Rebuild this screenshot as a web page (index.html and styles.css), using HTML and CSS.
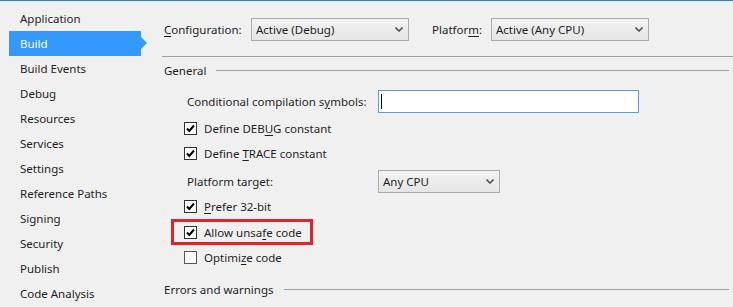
FILE: index.html
```html
<!DOCTYPE html>
<html>
<head>
<meta charset="utf-8">
<link rel="stylesheet" href="styles.css">
</head>
<body>
<div class="topline"></div>
<div class="page">
  <nav class="sidebar">
    <div class="nav-item">Application</div>
    <div class="nav-item active">Build</div>
    <div class="nav-item">Build Events</div>
    <div class="nav-item">Debug</div>
    <div class="nav-item">Resources</div>
    <div class="nav-item">Services</div>
    <div class="nav-item">Settings</div>
    <div class="nav-item">Reference Paths</div>
    <div class="nav-item">Signing</div>
    <div class="nav-item">Security</div>
    <div class="nav-item">Publish</div>
    <div class="nav-item">Code Analysis</div>
  </nav>
  <main class="main">
    <div class="config-row">
      <span class="config-label"><u>C</u>onfiguration:</span>
      <div class="combo combo-config">
        <span>Active (Debug)</span>
        <svg class="chev" width="8" height="5" viewBox="0 0 8 5"><path d="M0.5 0.5 L4 4 L7.5 0.5" fill="none" stroke="#555" stroke-width="1.6"/></svg>
      </div>
      <span class="platform-label">Platfor<u>m</u>:</span>
      <div class="combo combo-config">
        <span>Active (Any CPU)</span>
        <svg class="chev" width="8" height="5" viewBox="0 0 8 5"><path d="M0.5 0.5 L4 4 L7.5 0.5" fill="none" stroke="#555" stroke-width="1.6"/></svg>
      </div>
    </div>
    <div class="rule"></div>
    <div class="group-header"><span>General</span><div class="group-line"></div></div>
    <div class="field-row symbols-row">
      <span class="field-label">Conditional compilation s<u>y</u>mbols:</span>
      <div class="textbox"><span class="caret"></span></div>
    </div>
    <div class="check-row">
      <span class="checkbox checked"><svg width="11" height="11" viewBox="0 0 11 11"><path d="M2 5.5 L4.3 8 L9 2.5" fill="none" stroke="#000" stroke-width="2"/></svg></span>
      <span>Define DEB<u>U</u>G constant</span>
    </div>
    <div class="check-row">
      <span class="checkbox checked"><svg width="11" height="11" viewBox="0 0 11 11"><path d="M2 5.5 L4.3 8 L9 2.5" fill="none" stroke="#000" stroke-width="2"/></svg></span>
      <span>Define <u>T</u>RACE constant</span>
    </div>
    <div class="field-row target-row">
      <span class="field-label">Platform tar<u>g</u>et:</span>
      <div class="combo combo-target">
        <span>Any CPU</span>
        <svg class="chev" width="8" height="5" viewBox="0 0 8 5"><path d="M0.5 0.5 L4 4 L7.5 0.5" fill="none" stroke="#555" stroke-width="1.6"/></svg>
      </div>
    </div>
    <div class="check-row">
      <span class="checkbox checked"><svg width="11" height="11" viewBox="0 0 11 11"><path d="M2 5.5 L4.3 8 L9 2.5" fill="none" stroke="#000" stroke-width="2"/></svg></span>
      <span><u>P</u>refer 32-bit</span>
    </div>
    <div class="check-row highlight">
      <span class="checkbox checked"><svg width="11" height="11" viewBox="0 0 11 11"><path d="M2 5.5 L4.3 8 L9 2.5" fill="none" stroke="#000" stroke-width="2"/></svg></span>
      <span>Allow unsa<u>f</u>e code</span>
    </div>
    <div class="check-row">
      <span class="checkbox unchecked"></span>
      <span>Optimi<u>z</u>e code</span>
    </div>
    <div class="group-header errors"><span>Errors and warnings</span><div class="group-line"></div></div>
  </main>
</div>
</body>
</html>
```
FILE: styles.css
```css
html, body {
  margin: 0;
  padding: 0;
  background: #f0f0f0;
  width: 733px;
  height: 307px;
  overflow: hidden;
}
body {
  font-family: "Noto Sans", "Segoe UI", sans-serif;
  font-size: 11.5px;
  color: #1e1e1e;
}
u {
  text-decoration: underline;
  text-underline-offset: 2px;
}
.topline {
  height: 1px;
  background: #2b7cd6;
}
.page {
  display: flex;
}
.sidebar {
  width: 162px;
  flex: none;
  padding-top: 5px;
}
.nav-item {
  margin-left: 9px;
  width: 132px;
  box-sizing: border-box;
  height: 25px;
  line-height: 25px;
  padding-left: 11px;
  position: relative;
}
.nav-item.active {
  background: #3399ff;
  color: #fff;
}
.nav-item.active::after {
  content: "";
  position: absolute;
  right: -6px;
  top: 6px;
  border-left: 6px solid #3399ff;
  border-top: 6px solid transparent;
  border-bottom: 6px solid transparent;
}
.main {
  flex: 1;
  padding-top: 17px;
}
.config-row {
  display: flex;
  align-items: center;
  height: 23px;
  padding-left: 2px;
}
.config-label {
  width: 87px;
}
.platform-label {
  margin-left: 23px;
  width: 59px;
}
.combo {
  display: flex;
  align-items: center;
  justify-content: space-between;
  box-sizing: border-box;
  height: 23px;
  border: 1px solid #acacac;
  background: linear-gradient(#f2f2f2, #e6e6e6);
  padding: 0 5px 0 4px;
}
.combo-config {
  width: 158px;
}
.combo-target {
  width: 122px;
}
.chev {
  display: block;
}
.rule {
  margin-top: 15px;
  height: 1px;
  background: #a0a0a0;
}
.group-header {
  display: flex;
  align-items: center;
  height: 16px;
  margin-top: 5px;
  padding-left: 2px;
  margin-right: 4px;
}
.group-line {
  flex: 1;
  height: 1px;
  background: #a0a0a0;
  margin-left: 10px;
}
.field-row {
  display: flex;
  align-items: center;
  padding-left: 25px;
}
.field-label {
  width: 191px;
}
.symbols-row {
  margin-top: 12px;
  height: 23px;
}
.textbox {
  box-sizing: border-box;
  width: 261px;
  height: 23px;
  border: 1px solid #569de5;
  background: #fff;
  padding: 3px 2px;
}
.caret {
  display: block;
  width: 1px;
  height: 15px;
  background: #000;
}
.check-row {
  display: flex;
  align-items: center;
  height: 25px;
  padding-left: 22px;
}
.symbols-row + .check-row {
  margin-top: 3px;
}
.checkbox {
  box-sizing: border-box;
  width: 13px;
  height: 13px;
  border: 1px solid #333;
  background: #fff;
  margin-right: 7px;
  display: flex;
  align-items: center;
  justify-content: center;
}
.checkbox.unchecked {
  border-color: #555;
}
.target-row {
  margin-top: 4px;
  height: 22px;
}
.target-row + .check-row {
  margin-top: 2px;
}
.check-row.highlight {
  box-sizing: border-box;
  height: 26px;
  width: 142px;
  margin-left: 9px;
  padding-left: 10px;
  border: 3px solid #e8202a;
}
.group-header.errors {
  margin-top: 11px;
}
```
